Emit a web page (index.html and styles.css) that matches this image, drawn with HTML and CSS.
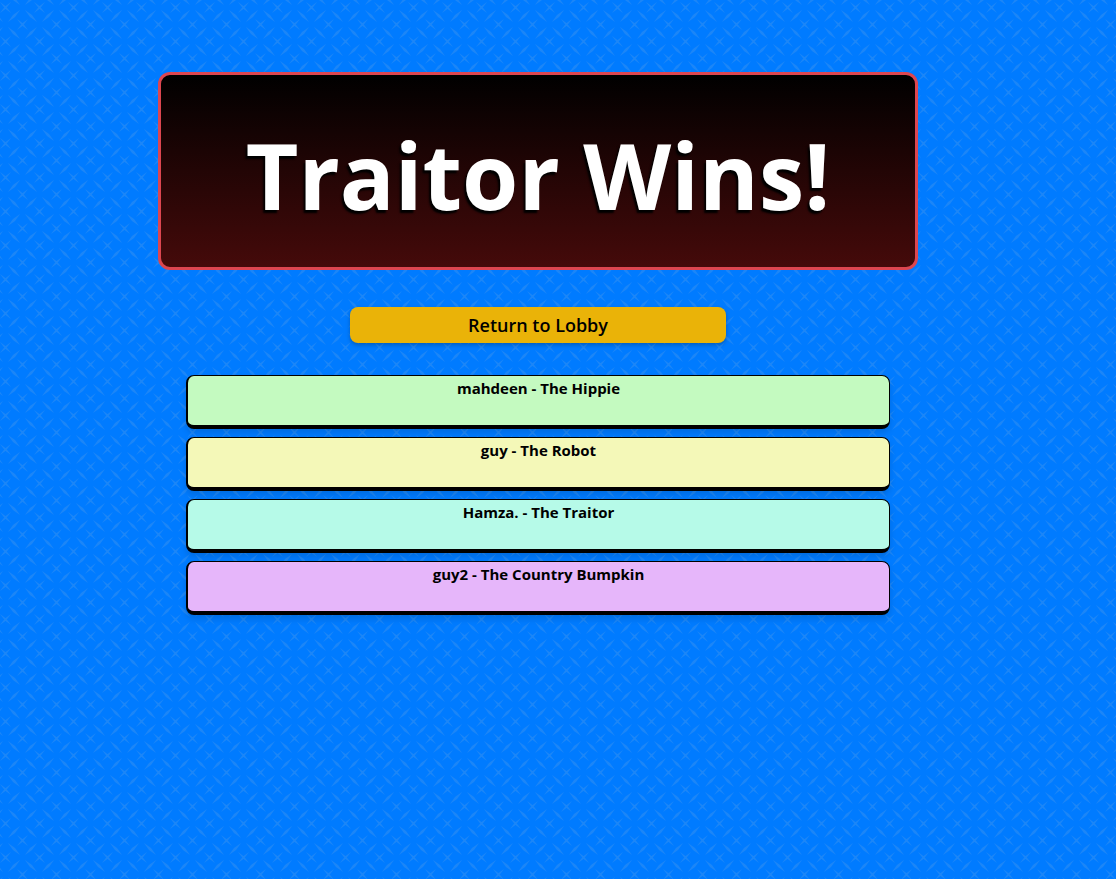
FILE: index.html
```html
<!DOCTYPE html>
<html lang="en">
<head>
<meta charset="utf-8">
<meta name="viewport" content="width=device-width, initial-scale=1">
<title>Traitor Wins!</title>
<link rel="stylesheet" href="styles.css">
</head>
<body>
<main class="results">
  <header class="banner">
    <h1 class="banner-title">Traitor Wins!</h1>
  </header>
  <button type="button" class="return-button">Return to Lobby</button>
  <ul class="players">
    <li class="player player-green">mahdeen - The Hippie</li>
    <li class="player player-yellow">guy - The Robot</li>
    <li class="player player-mint">Hamza. - The Traitor</li>
    <li class="player player-purple">guy2 - The Country Bumpkin</li>
  </ul>
</main>
</body>
</html>
```

FILE: styles.css
```css
* {
  box-sizing: border-box;
}

body {
  margin: 0;
  min-height: 100vh;
  font-family: "Segoe UI", "Open Sans", "Noto Sans", sans-serif;
  color: #000;
  background-color: #007bff;
  background-image: url("data:image/svg+xml,%3Csvg xmlns='http://www.w3.org/2000/svg' width='34' height='34' viewBox='0 0 34 34'%3E%3Cg fill='%2380aed8' fill-opacity='.22'%3E%3Cpath d='M0 2L6 6.5L11 13L5 8.5zM11 2L6 8.5L0 13L5 6.5zM34 2L40 6.5L45 13L39 8.5zM17 19L23 23.5L28 30L22 25.5zM28 19L23 25.5L17 30L22 23.5zM8 22L13 15L20 10L15 17zM25 10L32 15L37 22L30 17zM-9 10L-2 15L3 22L-4 17zM8 27L15 32L20 39L13 34zM8 -7L15 -2L20 5L13 0zM25 39L30 32L37 27L32 34zM-9 39L-4 32L3 27L-2 34zM25 5L30 -2L37 -7L32 0zM-9 5L-4 -2L3 -7L-2 0z'/%3E%3C/g%3E%3C/svg%3E");
}

.results {
  display: flex;
  flex-direction: column;
  align-items: center;
  padding: 72px 60px 40px 20px;
}

.banner {
  width: 100%;
  max-width: 760px;
  padding: 36px 16px 28px;
  border: 3px solid #dc4650;
  border-radius: 12px;
  background: linear-gradient(#000, #450a0a);
  text-align: center;
}

.banner-title {
  margin: 0;
  color: #fff;
  font-size: 91px;
  font-weight: 700;
  line-height: 128px;
  text-shadow: -2px 3px 2px #000;
}

.return-button {
  width: 100%;
  max-width: 376px;
  margin: 37px 0 32px;
  padding: 4px 16px;
  border: 0;
  border-radius: 8px;
  background: #eab308;
  box-shadow: 0 2px 4px rgba(0, 0, 0, 0.25);
  color: #000;
  font-family: inherit;
  font-size: 18px;
  font-weight: 600;
  line-height: 28px;
}

.players {
  display: grid;
  gap: 8px;
  width: 100%;
  max-width: 704px;
  margin: 0;
  padding: 0;
  list-style: none;
}

.player {
  min-height: 54px;
  border: solid #000;
  border-width: 1px 1px 4px 2px;
  border-radius: 8px;
  box-shadow: 0 4px 6px rgba(0, 0, 0, 0.12);
  font-size: 15px;
  font-weight: 700;
  line-height: 24px;
  text-align: center;
}

.player-green { background: #c4fac0; }
.player-yellow { background: #f4f8b8; }
.player-mint { background: #b6fae8; }
.player-purple { background: #e6b6fa; }
```
